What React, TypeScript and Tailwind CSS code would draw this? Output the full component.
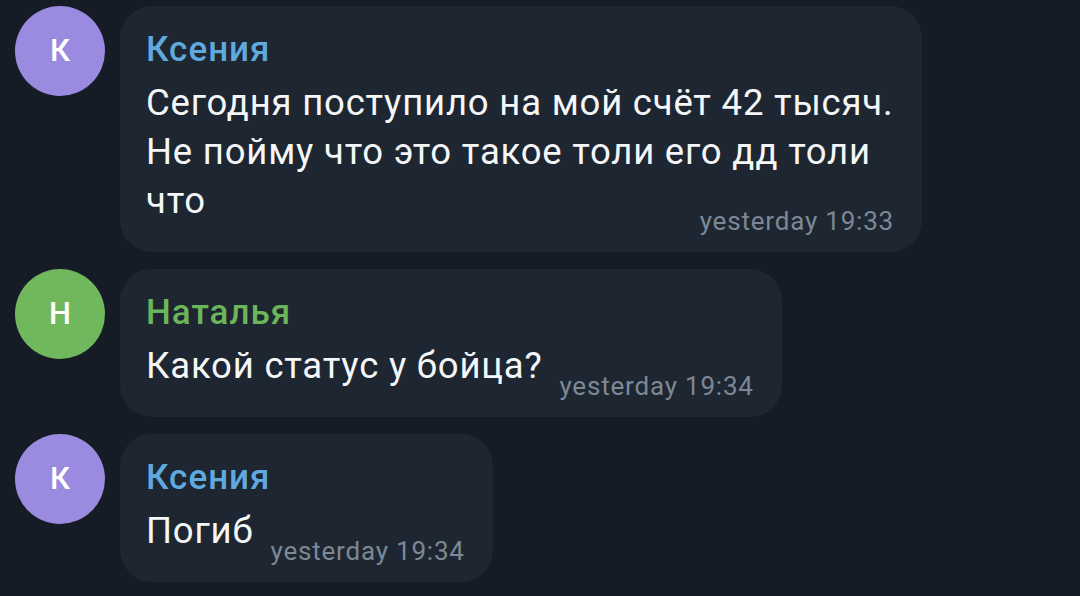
type Msg = {
  initial: string;
  name: string;
  avatar: string;
  nameColor: string;
  text: string;
  time: string;
};

const messages: Msg[] = [
  {
    initial: "К",
    name: "Ксения",
    avatar: "bg-[#9a8be0]",
    nameColor: "text-[#5fa9de]",
    text: "Сегодня поступило на мой счёт 42 тысяч. Не пойму что это такое толи его дд толи что",
    time: "yesterday 19:33",
  },
  {
    initial: "Н",
    name: "Наталья",
    avatar: "bg-[#71b75d]",
    nameColor: "text-[#6cb55a]",
    text: "Какой статус у бойца?",
    time: "yesterday 19:34",
  },
  {
    initial: "К",
    name: "Ксения",
    avatar: "bg-[#9a8be0]",
    nameColor: "text-[#5fa9de]",
    text: "Погиб",
    time: "yesterday 19:34",
  },
];

function Message({ m }: { m: Msg }) {
  return (
    <div className="flex items-start gap-[15px]">
      <div
        className={`${m.avatar} w-[90px] h-[90px] shrink-0 rounded-full flex items-center justify-center text-white text-[31px] font-medium`}
      >
        {m.initial}
      </div>
      <div className="w-fit max-w-[802px] bg-[#1e2631] rounded-[32px] pl-[26px] pr-[28px] pt-[22px] pb-[27px]">
        <div className={`${m.nameColor} text-[35px] leading-[44px] font-medium tracking-[1px]`}>
          {m.name}
        </div>
        <div className="mt-[6px] text-[36.5px] leading-[49px] tracking-[0.8px] text-[#f4f6f8]">
          <span>{m.text}</span>
          {/* time floats onto the last line, sitting a bit lower */}
          <span className="float-right relative top-[30px] ml-[17px] text-[26px] leading-[30px] tracking-[0.8px] text-[#7c8895]">
            {m.time}
          </span>
        </div>
      </div>
    </div>
  );
}

export default function App() {
  return (
    <div
      className="w-[1080px] h-[596px] overflow-hidden bg-[#161c25] pl-[15px] pt-[6px] flex flex-col gap-[17px]"
      style={{ fontFamily: "Roboto, 'Noto Sans', sans-serif" }}
    >
      {messages.map((m, i) => (
        <Message key={i} m={m} />
      ))}
    </div>
  );
}
